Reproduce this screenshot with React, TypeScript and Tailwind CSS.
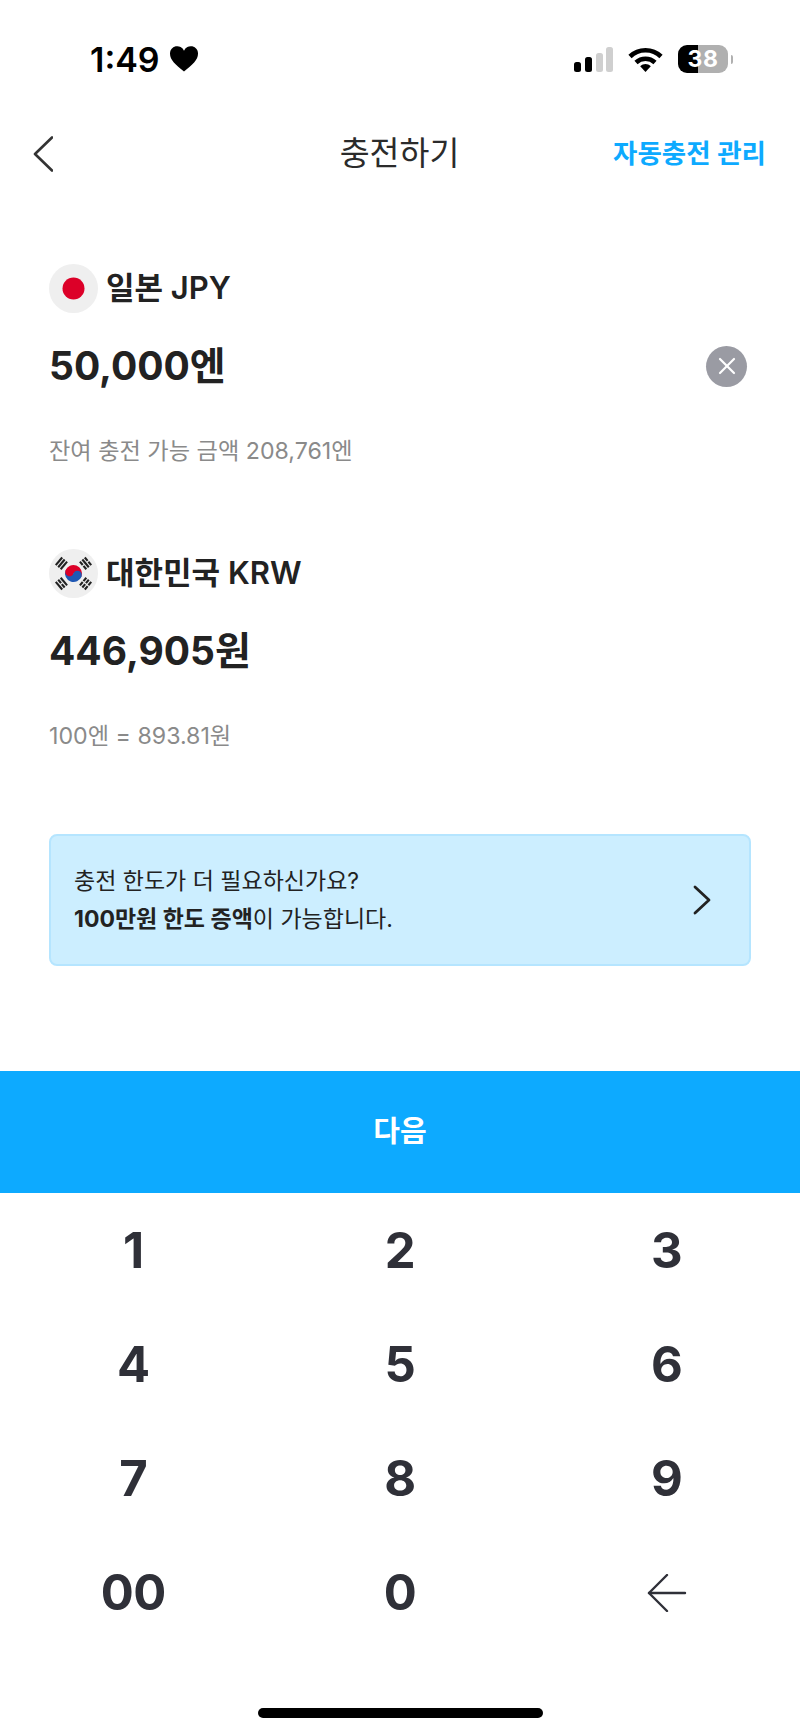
const font = "font-['Inter','Noto_Sans_CJK_KR',sans-serif]";

function SignalIcon() {
  return (
    <svg width="39" height="25" viewBox="0 0 39 25" fill="none">
      <rect x="0" y="15" width="7" height="10" rx="2.5" fill="#000" />
      <rect x="11" y="10" width="7" height="15" rx="2.5" fill="#000" />
      <rect x="22" y="6" width="7" height="19" rx="2.5" fill="#cfcfcf" />
      <rect x="32" y="0" width="7" height="25" rx="2.5" fill="#cfcfcf" />
    </svg>
  );
}

function WifiIcon() {
  return (
    <svg width="35" height="25" viewBox="0 0 35 25" fill="none">
      <path d="M2 9.5C10.5 1.2 24.5 1.2 33 9.5" stroke="#000" strokeWidth="4.6" />
      <path d="M8 15.5C13.4 10.5 21.6 10.5 27 15.5" stroke="#000" strokeWidth="4.6" />
      <path d="M12.2 19.2C15.4 16.4 19.6 16.4 22.8 19.2L17.5 25Z" fill="#000" />
    </svg>
  );
}

function Battery() {
  return (
    <div className="flex items-center gap-[3px]">
      <div className="relative flex h-[28px] w-[50px] overflow-hidden rounded-[9px]">
        <div className="w-[20px] bg-black" />
        <div className="flex-1 bg-[#b0b0b0]" />
        <span className="absolute inset-0 flex items-center justify-center font-['Inter',sans-serif] text-[23px] font-bold tracking-[0.5px] text-white">
          38
        </span>
      </div>
      <div className="h-[9px] w-[2px] rounded-r-full bg-[#b0b0b0]" />
    </div>
  );
}

function JapanFlag() {
  return (
    <svg width="49" height="49" viewBox="0 0 49 49">
      <circle cx="24.5" cy="24.5" r="24.5" fill="#efefef" />
      <circle cx="24.5" cy="24.5" r="11" fill="#dc0028" />
    </svg>
  );
}

function Trigram({ angle, breaks }: { angle: number; breaks: boolean[] }) {
  return (
    <g transform={`rotate(${angle} 24.5 24.5)`}>
      {breaks.map((broken, i) => {
        const y = 4.5 + i * 3.2;
        return broken ? (
          <g key={i}>
            <rect x="19.5" y={y} width="4.4" height="2.1" fill="#222" />
            <rect x="25.1" y={y} width="4.4" height="2.1" fill="#222" />
          </g>
        ) : (
          <rect key={i} x="19.5" y={y} width="10" height="2.1" fill="#222" />
        );
      })}
    </g>
  );
}

function KoreaFlag() {
  return (
    <svg width="49" height="49" viewBox="0 0 49 49">
      <circle cx="24.5" cy="24.5" r="24.5" fill="#efefef" />
      <Trigram angle={-50} breaks={[false, false, false]} />
      <Trigram angle={50} breaks={[true, false, true]} />
      <Trigram angle={-130} breaks={[false, true, false]} />
      <Trigram angle={130} breaks={[true, true, true]} />
      <g transform="rotate(20 24.5 24.5)">
        <path d="M16 24.5a8.5 8.5 0 0 1 17 0Z" fill="#dc0028" />
        <path d="M16 24.5a8.5 8.5 0 0 0 17 0Z" fill="#1f58b4" />
        <circle cx="20.25" cy="24.5" r="4.25" fill="#dc0028" />
        <circle cx="28.75" cy="24.5" r="4.25" fill="#1f58b4" />
      </g>
    </svg>
  );
}

function CurrencyBlock({
  flag,
  label,
  amount,
  note,
  clearable,
}: {
  flag: React.ReactNode;
  label: string;
  amount: string;
  note: string;
  clearable?: boolean;
}) {
  return (
    <section>
      <div className="flex h-[49px] items-center gap-[8px]">
        {flag}
        <span className="text-[31px] font-semibold text-[#222]">{label}</span>
      </div>
      <div className="mt-[28px] flex h-[50px] items-center justify-between pr-[4px]">
        <span className="text-[39px] font-bold text-[#222]">{amount}</span>
        {clearable && (
          <div className="flex h-[41px] w-[41px] items-center justify-center rounded-full bg-[#9a9ba3]">
            <svg width="20" height="20" viewBox="0 0 20 20" fill="none" stroke="#fff" strokeWidth="2.2" strokeLinecap="round">
              <path d="M3 3l14 14" />
              <path d="M17 3L3 17" />
            </svg>
          </div>
        )}
      </div>
      <p className="mt-[45px] h-[30px] text-[23.2px] leading-[30px] text-[#8a8a8a]">{note}</p>
    </section>
  );
}

const keys = ["1", "2", "3", "4", "5", "6", "7", "8", "9", "00", "0"];

export default function App() {
  return (
    <div className={`flex h-[1735px] w-[800px] flex-col overflow-hidden bg-white ${font}`}>
      <header className="flex h-[118px] items-center justify-between pl-[90px] pr-[67px]">
        <div className="flex items-center gap-[10px]">
          <span className="font-['Inter',sans-serif] text-[34px] font-semibold text-black">1:49</span>
          <svg width="28" height="26" viewBox="0 0 30 27">
            <path d="M15 27C6 20 0 14.5 0 8A7.8 7.8 0 0 1 15 4.6 7.8 7.8 0 0 1 30 8C30 14.5 24 20 15 27Z" fill="#000" />
          </svg>
        </div>
        <div className="flex items-center gap-[15px]">
          <SignalIcon />
          <WifiIcon />
          <Battery />
        </div>
      </header>

      <nav className="grid h-[72px] grid-cols-[1fr_auto_1fr] items-center pl-[33px] pr-[34px]">
        <svg width="20" height="36" viewBox="0 0 20 36" fill="none" stroke="#333" strokeWidth="2.6" strokeLinecap="round" strokeLinejoin="round">
          <path d="M19 1.5L2 18l17 16.5" />
        </svg>
        <h1 className="text-[32.5px] font-normal text-[#2b2b2b]">충전하기</h1>
        <a className="justify-self-end text-[26.5px] font-semibold text-[#0daaff]">자동충전 관리</a>
      </nav>

      <main className="flex flex-1 flex-col px-[49px] pt-[74px]">
        <CurrencyBlock flag={<JapanFlag />} label="일본 JPY" amount="50,000엔" note="잔여 충전 가능 금액 208,761엔" clearable />
        <div className="mt-[83px]">
          <CurrencyBlock flag={<KoreaFlag />} label="대한민국 KRW" amount="446,905원" note="100엔 = 893.81원" />
        </div>
        <div className="mt-[83px] flex h-[132px] items-center justify-between rounded-[8px] border-2 border-[#b5e5ff] bg-[#cceeff] pl-[23px] pr-[38px]">
          <p className="text-[23px] leading-[38px] text-[#222]">
            충전 한도가 더 필요하신가요?
            <br />
            <b className="font-bold">100만원 한도 증액</b>이 가능합니다.
          </p>
          <svg width="18" height="30" viewBox="0 0 18 30" fill="none" stroke="#222" strokeWidth="2.8" strokeLinecap="round" strokeLinejoin="round">
            <path d="M2 2l14 13L2 28" />
          </svg>
        </div>
      </main>

      <button className="flex h-[122px] items-center justify-center bg-[#0daaff] text-[29px] font-semibold text-white">
        다음
      </button>

      <div className="grid h-[457px] grid-cols-3 grid-rows-4 pt-[1px] font-['Inter',sans-serif]">
        {keys.map((k) => (
          <div key={k} className="flex items-center justify-center text-[49px] font-bold tracking-[-0.5px] text-[#2f3038]">
            {k}
          </div>
        ))}
        <div className="flex items-center justify-center">
          <svg width="40" height="38" viewBox="0 0 40 38" fill="none" stroke="#2f3038" strokeWidth="2.4" strokeLinecap="round" strokeLinejoin="round">
            <path d="M38 19H2" />
            <path d="M20 1L2 19l18 18" />
          </svg>
        </div>
      </div>

      <div className="flex h-[85px] justify-center pt-[58px]">
        <div className="h-[10px] w-[285px] rounded-full bg-black" />
      </div>
    </div>
  );
}
